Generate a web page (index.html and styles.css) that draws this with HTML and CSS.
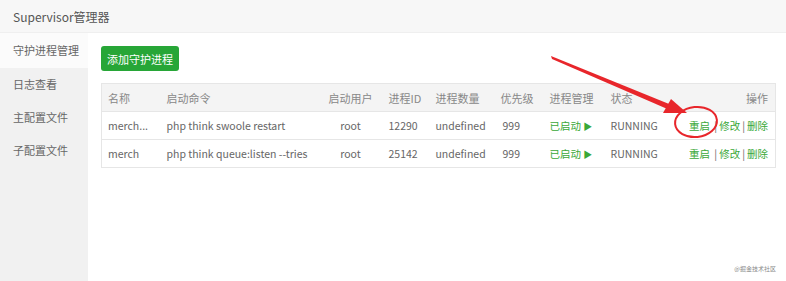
FILE: index.html
```html
<!DOCTYPE html>
<html lang="zh-CN">
<head>
    <meta charset="UTF-8">
    <meta name="viewport" content="width=device-width, initial-scale=1.0">
    <title>Supervisor管理器</title>
    <link rel="stylesheet" href="styles.css">
</head>
<body>
    <header class="topbar">Supervisor管理器</header>
    <div class="layout">
        <nav class="sidebar">
            <a class="nav-item active">守护进程管理</a>
            <a class="nav-item">日志查看</a>
            <a class="nav-item">主配置文件</a>
            <a class="nav-item">子配置文件</a>
        </nav>
        <main class="content">
            <button type="button" class="add-btn">添加守护进程</button>
            <table class="proc-table">
                <thead>
                    <tr>
                        <th class="c-name">名称</th>
                        <th class="c-cmd">启动命令</th>
                        <th class="c-user">启动用户</th>
                        <th class="c-pid">进程ID</th>
                        <th class="c-num">进程数量</th>
                        <th class="c-pri">优先级</th>
                        <th class="c-mgr">进程管理</th>
                        <th class="c-state">状态</th>
                        <th class="c-ops">操作</th>
                    </tr>
                </thead>
                <tbody>
                    <tr>
                        <td class="c-name">merch...</td>
                        <td class="c-cmd">php think swoole restart</td>
                        <td class="c-user">root</td>
                        <td class="c-pid">12290</td>
                        <td class="c-num">undefined</td>
                        <td class="c-pri">999</td>
                        <td class="c-mgr green">已启动 <span class="play">&#9654;</span></td>
                        <td class="c-state">RUNNING</td>
                        <td class="c-ops"><a class="green">重启</a> <span class="sep">|</span><a class="green">修改</a><span class="sep">|</span><a class="green">删除</a></td>
                    </tr>
                    <tr>
                        <td class="c-name">merch</td>
                        <td class="c-cmd">php think queue:listen --tries</td>
                        <td class="c-user">root</td>
                        <td class="c-pid">25142</td>
                        <td class="c-num">undefined</td>
                        <td class="c-pri">999</td>
                        <td class="c-mgr green">已启动 <span class="play">&#9654;</span></td>
                        <td class="c-state">RUNNING</td>
                        <td class="c-ops"><a class="green">重启</a> <span class="sep">|</span><a class="green">修改</a><span class="sep">|</span><a class="green">删除</a></td>
                    </tr>
                </tbody>
            </table>
        </main>
    </div>

    <!-- annotation drawn on top of the screenshot -->
    <svg class="mark" width="786" height="281" viewBox="0 0 786 281">
        <polygon points="551,56 552,59 672,111 674,106" fill="#e8262b"/>
        <polygon points="687,113 663,113 671,99" fill="#e8262b"/>
        <ellipse cx="696" cy="122" rx="21" ry="15" fill="none" stroke="#e8262b" stroke-width="2" transform="rotate(-6 696 122)"/>
    </svg>
    <div class="watermark">@掘金技术社区</div>
</body>
</html>
```

FILE: styles.css
```css
body {
    margin: 0;
    padding: 0;
    background-color: #ffffff;
    font-family: "Noto Sans CJK SC", "Noto Sans", sans-serif;
    font-size: 11px;
    color: #666;
    height: 281px;
    overflow: hidden;
}

.topbar {
    height: 33px;
    line-height: 33px;
    padding-left: 13px;
    background-color: #f7f7f7;
    border-bottom: 1px solid #efefef;
    font-size: 12px;
    color: #555;
    box-sizing: border-box;
}

.layout {
    display: flex;
    height: 248px;
}

.sidebar {
    width: 88px;
    flex-shrink: 0;
    background-color: #f1f1f1;
    display: flex;
    flex-direction: column;
}

.nav-item {
    height: 33px;
    line-height: 33px;
    padding-left: 13px;
    color: #666;
    font-size: 11px;
}

.nav-item.active {
    background-color: #fbfbfb;
    height: 35px;
    line-height: 35px;
}

.content {
    flex: 1;
    padding: 13px 0 0 13px;
}

.add-btn {
    display: block;
    width: 78px;
    height: 25px;
    padding: 0;
    background-color: #27a637;
    color: #ffffff;
    border: none;
    border-radius: 3px;
    font-family: "Noto Sans CJK SC", sans-serif;
    font-size: 11px;
}

.proc-table {
    margin-top: 12px;
    width: 675px;
    table-layout: fixed;
    border-collapse: collapse;
    border: 1px solid #e6e6e6;
}

.proc-table th,
.proc-table td {
    box-sizing: border-box;
    height: 28px;
    padding: 0;
    font-weight: normal;
    text-align: left;
    white-space: nowrap;
}

.proc-table th {
    background-color: #f4f4f4;
    color: #888;
}

.proc-table td {
    border-top: 1px solid #e6e6e6;
    color: #666;
    font-size: 10.5px;
}

.c-name { width: 65px; padding-left: 6px !important; }
.c-cmd { width: 146px; }
.c-user { width: 76px; text-align: center !important; }
.c-pid { width: 47px; }
.c-num { width: 58px; }
.c-pri { width: 56px; padding-left: 7px !important; }
.proc-table td.c-pri { padding-left: 9px !important; }
.c-mgr { width: 61px; }
.c-state { width: 69px; }
.c-ops { text-align: right !important; padding-right: 7px !important; }

.proc-table td.green,
.green {
    color: #3aa838;
}

.play {
    font-size: 9px;
}

.sep {
    color: #666;
    margin: 0 2px;
}

.mark {
    position: absolute;
    left: 0;
    top: 0;
    pointer-events: none;
}

.watermark {
    position: absolute;
    right: 10px;
    bottom: 8px;
    font-family: "Noto Sans CJK SC", sans-serif;
    font-size: 6px;
    color: #888;
}
```
